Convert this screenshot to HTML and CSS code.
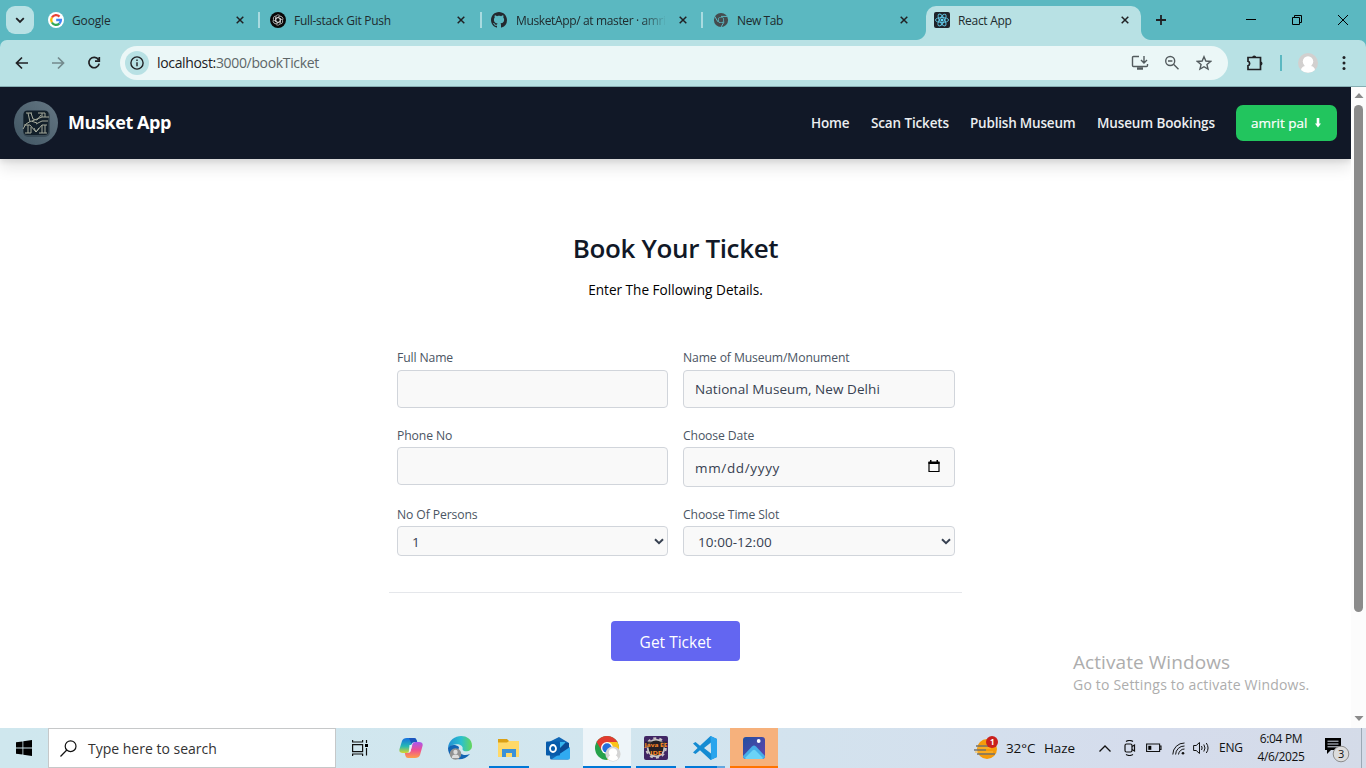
FILE: index.html
```html
<!DOCTYPE html>
<html lang="en">
<head>
<meta charset="utf-8">
<title>React App</title>
<link rel="stylesheet" href="styles.css">
</head>
<body>
<div class="screen">
  <header class="tabstrip">
    <button class="tab-search"><svg width="10" height="7" viewBox="0 0 10 7"><path d="M1.2 1.2 5 5l3.800-3.800" class="ln w2"/></svg></button>
    <div class="tab">
      <svg class="fav" viewBox="0 0 16 16"><circle cx="8" cy="8" r="8" fill="#fff"/><g fill="none" stroke-width="2.300"><path d="M3.900 5.500A4.900 4.900 0 0 1 11.500 4.600" stroke="#ea4335"/><path d="M3.900 5.500a4.900 4.900 0 0 0 0 5" stroke="#fbbc05"/><path d="M3.900 10.500A4.900 4.900 0 0 0 11.300 11.600" stroke="#34a853"/><path d="M11.300 11.600A4.900 4.900 0 0 0 12.900 8H8.200" stroke="#4285f4"/></g></svg>
      <span class="tab-title t-google">Google</span><svg class="x" viewBox="0 0 8 8"><path d="M.7.7l6.600 6.600M7.300.7.7 7.300"/></svg>
    </div>
    <div class="tab sep">
      <svg class="fav" viewBox="0 0 16 16"><circle cx="8" cy="8" r="8" fill="#080808"/><g fill="none" stroke="#ccc" stroke-width=".75"><path id="petal" d="M5.700 9.200V5.200a2.500 2.500 0 0 1 4.600-1.200M5.700 6.700 8 5.400l3.300 1.900"/><use href="#petal" transform="rotate(60 8 8)"/><use href="#petal" transform="rotate(120 8 8)"/><use href="#petal" transform="rotate(180 8 8)"/><use href="#petal" transform="rotate(240 8 8)"/><use href="#petal" transform="rotate(300 8 8)"/></g></svg>
      <span class="tab-title t-git">Full-stack Git Push</span><svg class="x" viewBox="0 0 8 8"><path d="M.7.7l6.600 6.600M7.300.7.7 7.300"/></svg>
    </div>
    <div class="tab sep">
      <svg class="fav" viewBox="0 0 16 16"><path fill="#24292f" d="M8 0C3.580 0 0 3.580 0 8c0 3.540 2.290 6.530 5.470 7.590.4.070.55-.17.55-.38 0-.19-.01-.82-.01-1.490-2.010.37-2.530-.49-2.690-.94-.09-.23-.48-.94-.82-1.130-.28-.15-.68-.52-.01-.53.63-.01 1.080.58 1.230.82.72 1.210 1.870.87 2.330.66.070-.52.28-.87.51-1.070-1.780-.2-3.640-.89-3.640-3.950 0-.87.31-1.590.82-2.150-.08-.2-.36-1.020.08-2.120 0 0 .67-.21 2.200.82.64-.18 1.320-.27 2-.27s1.360.09 2 .27c1.530-1.040 2.200-.82 2.200-.82.44 1.100.16 1.920.08 2.120.51.56.82 1.270.82 2.150 0 3.070-1.870 3.750-3.650 3.950.29.25.54.73.54 1.480 0 1.070-.01 1.930-.01 2.200 0 .21.15.46.55.38A8.010 8.010 0 0 0 16 8c0-4.420-3.580-8-8-8z"/></svg>
      <span class="tab-title t-hub">MusketApp/ at master · amri</span><svg class="x" viewBox="0 0 8 8"><path d="M.7.7l6.600 6.600M7.300.7.7 7.300"/></svg>
    </div>
    <div class="tab sep">
      <svg class="fav" viewBox="0 0 16 16"><circle cx="8" cy="8" r="5.100" fill="none" stroke="#454b4e" stroke-width="4"/><circle cx="8" cy="8" r="2.400" fill="#454b4e"/><path d="M8 4.400h6.400M4.900 9.800 1.700 4.300M11.100 9.800 7.900 15.300" stroke="#5bb8c1" stroke-width="1"/></svg>
      <span class="tab-title t-new">New Tab</span><svg class="x" viewBox="0 0 8 8"><path d="M.7.7l6.600 6.600M7.300.7.7 7.300"/></svg>
    </div>
    <div class="tab active">
      <svg class="fav" viewBox="0 0 16 16"><rect width="16" height="16" rx="2" fill="#20232a"/><g fill="none" stroke="#61c5e3" stroke-width=".9"><ellipse cx="8" cy="8" rx="6.600" ry="2.500"/><ellipse cx="8" cy="8" rx="6.600" ry="2.500" transform="rotate(60 8 8)"/><ellipse cx="8" cy="8" rx="6.600" ry="2.500" transform="rotate(120 8 8)"/></g><circle cx="8" cy="8" r="1.500" fill="#61dafb"/></svg>
      <span class="tab-title t-react">React App</span><svg class="x" viewBox="0 0 8 8"><path d="M.7.7l6.600 6.600M7.300.7.7 7.300"/></svg>
    </div>
    <svg class="plus" width="10" height="10" viewBox="0 0 10 10"><path d="M5 0v10M0 5h10" class="ln w2"/></svg>
    <div class="win-controls">
      <svg width="10" height="10"><path d="M0 4.500h10" stroke="#000"/></svg>
      <svg width="10" height="10" fill="none" stroke="#000"><path d="M.5 2.500h7v7h-7zM2.500 2.500v-2h7v7h-2"/></svg>
      <svg width="10" height="10"><path d="M0 0l10 10M10 0 0 10" stroke="#000"/></svg>
    </div>
  </header>

  <div class="toolbar">
    <div class="nav-icons">
      <svg width="14" height="14" viewBox="0 0 14 14"><path d="M13 7H2M7 1.500 1.500 7 7 12.500" class="ln w17"/></svg>
      <svg width="14" height="14" viewBox="0 0 14 14" opacity=".45"><path d="M1 7h11M7 1.500 12.500 7 7 12.500" class="ln w17"/></svg>
      <svg width="14" height="14" viewBox="0 0 14 14"><path d="M11.500 3.700A5.200 5.200 0 1 0 12.200 7.600M12.300 1v4.200H8" class="ln w17"/></svg>
    </div>
    <div class="omnibox">
      <span class="info"><svg width="14" height="14" viewBox="0 0 14 14"><circle cx="7" cy="7" r="6.100" class="ln w15"/><path d="M7 6.200v4M7 3.500v1.400" class="ln w15"/></svg></span>
      <span class="url">localhost:<span class="path">3000/bookTicket</span></span>
      <svg width="18" height="16" viewBox="0 0 18 16" class="grey"><path d="M8 1.500H2.500q-1 0-1 1v8q0 1 1 1h13q1 0 1-1V9M13 1v6M10 5l3 3 3-3"/><path d="M6 13.500h6" stroke-width="2.500"/></svg>
      <svg width="16" height="16" viewBox="0 0 16 16" class="grey"><circle cx="6.200" cy="6" r="4.500"/><path d="M9.500 9.300l5 5M4 6h4.400"/></svg>
      <svg width="16" height="16" viewBox="0 0 16 16" class="grey"><path d="M8 1.700l1.850 4.350 4.700.4-3.600 3.100 1.100 4.600L8 11.700l-4.050 2.450 1.100-4.600-3.600-3.100 4.700-.4z"/></svg>
    </div>
    <svg class="ext" width="18" height="18" viewBox="0 0 18 18"><path d="M2 3.500h12.500v12H2v-3.800a2.300 2.300 0 0 0 0-4.400z" class="ln w17"/><path d="M6.200 3.500a2 2 0 0 1 4 0zM14.500 7.500a2 2 0 0 1 0 4z"/></svg>
    <span class="bar"></span>
    <svg class="avatar" width="20" height="20" viewBox="0 0 20 20"><circle cx="10" cy="10" r="10" fill="#d2d0cf"/><circle cx="10" cy="8.500" r="5.200" fill="#fff"/><path d="M3 17q1-4 4.500-4h5q3.500 0 4.500 4a10 10 0 0 1-14 0z" fill="#fff"/></svg>
    <svg class="dots" width="4" height="16" viewBox="0 0 4 16" fill="#202124"><circle cx="2" cy="2.500" r="1.500"/><circle cx="2" cy="8" r="1.500"/><circle cx="2" cy="13.500" r="1.500"/></svg>
  </div>

  <div class="viewport">
    <div class="page">
      <nav class="site-nav">
        <svg class="logo" width="44" height="44" viewBox="0 0 44 44">
          <defs><linearGradient id="lg" x1="0" y1="1" x2="1" y2="0"><stop offset="0" stop-color="#405562"/><stop offset="1" stop-color="#657784"/></linearGradient></defs>
          <circle cx="22" cy="22" r="22" fill="url(#lg)"/><rect x="9" y="10" width="27" height="26" rx="5" fill="#2b3a45" opacity=".6"/><rect x="9.500" y="9.500" width="25" height="24.500" rx="4" fill="#121f29"/>
          <g fill="none" stroke="#a5aa9b" stroke-width="1"><path d="M12 12h6M14 12l2 9M17 12l2 6 4 1 4-5M24 12h7M28 12v4M31 12v4M18 20l10-4h7M22 23l6-3h6M10 24h6l6 7 6-7h5M11 32h6M14 24v8M17 26v6M20 27l2 4 3-4M25 32h8M28 24v8M31 24v8M9 28l3-5 5-3 6 2"/></g>
        </svg>
        <span class="brand">Musket App</span>
        <a class="l1">Home</a><a class="l2">Scan Tickets</a><a class="l3">Publish Museum</a><a class="l4">Museum Bookings</a>
        <button class="user"><span>amrit pal</span><svg width="6" height="10" viewBox="0 0 6 10"><path d="M1.700 0h2.600v5.500H6L3 9.500 0 5.500h1.700z" fill="#fff"/></svg></button>
      </nav>
      <main>
        <h1>Book Your Ticket</h1>
        <p class="sub">Enter The Following Details.</p>
        <form class="form">
          <label class="field"><span class="f1">Full Name</span><input type="text"></label>
          <label class="field"><span class="f2">Name of Museum/Monument</span><div class="control museum"><span>National Museum, New Delhi</span></div></label>
          <label class="field"><span class="f3">Phone No</span><input type="text"></label>
          <label class="field"><span class="f4">Choose Date</span><div class="control date"><span>mm/dd/yyyy</span><svg width="12" height="13" viewBox="0 0 12 13"><path d="M1 2.500h10v9H1z" fill="none" stroke="#000" stroke-width="1.200"/><path d="M.5 1.500h11v2.500H.5zM2 0h1.500v2H2zM8.500 0H10v2H8.500z"/></svg></div></label>
          <label class="field"><span class="f5">No Of Persons</span><div class="control select"><span>1</span><svg width="10" height="7" viewBox="0 0 10 7"><path d="M1 1.200l4 3.900 4-3.900"/></svg></div></label>
          <label class="field"><span class="f6">Choose Time Slot</span><div class="control select"><span class="slot">10:00-12:00</span><svg width="10" height="7" viewBox="0 0 10 7"><path d="M1 1.200l4 3.900 4-3.900"/></svg></div></label>
        </form>
        <div class="actions"><button class="get"><span>Get Ticket</span></button></div>
      </main>
    </div>
    <div class="scroll"><svg width="10" height="5"><path d="M5 0l4.500 5h-9z"/></svg><i class="thumb"></i><svg width="10" height="5"><path d="M5 5L.5 0h9z"/></svg></div>
    <div class="watermark"><div class="w-a">Activate Windows</div><div class="w-b">Go to Settings to activate Windows.</div></div>
  </div>

  <footer class="taskbar">
    <div class="start"><svg width="16" height="16" viewBox="0 0 16 16"><path d="M0 2.300 6.500 1.400v6.100H0zM7.300 1.300 16 0v7.500H7.300zM0 8.400h6.500v6.200L0 13.700zM7.300 8.400H16V16l-8.700-1.200z"/></svg></div>
    <div class="search"><svg width="17" height="17" viewBox="0 0 17 17" fill="none" stroke="#111" stroke-width="1.200"><circle cx="10.600" cy="6.200" r="5.400"/><path d="M6.800 10 .5 16.500"/></svg><span>Type here to search</span></div>
    <div class="start tv"><svg width="17" height="16" viewBox="0 0 17 16" fill="none" stroke="#111" stroke-width="1.200"><path d="M.6 4.600h10v7H.6zM.6 0v2h10V0M.6 16v-2h10v2M14.500 0v3M14.500 8v7.500"/><path d="M13 4h3v3h-3z" fill="#000" stroke="none"/></svg></div>
    <div class="apps">
      <div class="app"><svg width="24" height="22" viewBox="0 0 24 22"><defs><linearGradient id="c1" x2="0" y2="1"><stop stop-color="#1570e0"/><stop offset=".55" stop-color="#26b9b4"/><stop offset="1" stop-color="#d9d52b"/></linearGradient><linearGradient id="c2" x2="0" y2="1"><stop stop-color="#a857ef"/><stop offset=".5" stop-color="#ee4f93"/><stop offset="1" stop-color="#ff9e47"/></linearGradient></defs><path d="M8 1h7q2 0 2.500 2l.7 2h-3q-2 0-2.700 2l-2 7q-.7 2-3 2H4Q-.500 16 .5 12L3 4q1-3 5-3z" fill="url(#c1)"/><path d="M16 21H9q-2 0-2.500-2l-.7-3h3q2 0 2.700-2l2-7q.7-2 3-2h3.500q4.500 0 3.500 4l-2.500 9q-1 3-5 3z" fill="url(#c2)"/><path d="M10 1h5q2 0 2.500 2l.7 2h-3q-2 0-2.700 2z" fill="#1b55bd"/><path d="M10.500 8h2.700l-1.500 6q-.5 1.500-2 1.500z" fill="#e9eef4"/></svg></div>
      <div class="app"><svg width="24" height="24" viewBox="0 0 24 24"><defs><linearGradient id="e1"><stop stop-color="#2290d5"/><stop offset=".55" stop-color="#2bc0ce"/><stop offset="1" stop-color="#65d65a"/></linearGradient></defs><path d="M0 12C1-3 24-4 24 10c0 6.500-9.500 6.500-9.500 3C16 9 8 5 0 12z" fill="url(#e1)"/><path d="M0 12C0 24 15 27 22 18c-7 3-13-1-11-7-5-4-10-1-11 1z" fill="#1264b4"/><circle cx="7.500" cy="18" r="5.800" fill="#929292"/><circle cx="7.500" cy="16" r="2.200" fill="#ddd"/><path d="M4 21q0-2.500 3.500-2.500T11 21v1H4z" fill="#ddd"/></svg></div>
      <div class="app run"><svg width="22" height="20" viewBox="0 0 22 20"><path d="M0 1h9l2 2v4H0z" fill="#dba014"/><path d="M0 4.500h9l2-1.500h10v16H0z" fill="#ffd968"/><path d="M4 11h14v8h-4v-4H8v4H4z" fill="#3a91d8"/></svg></div>
      <div class="app"><svg width="24" height="23" viewBox="0 0 24 23"><path d="M3 5 13 0l10 6v15q0 1.500-1.500 1.500H5.500Q4 22.500 4 21z" fill="#1067b5"/><path d="M12 5h7v6h-7z" fill="#34b4ee"/><path d="M19 6l4 0v6l-9 5-1-5z" fill="#0b4b94"/><path d="M6 22 24 10v11q0 1.500-1.500 1.500z" fill="#30aaf0"/><rect y="4.500" width="14" height="14" rx="1" fill="#075bab"/><ellipse cx="7" cy="11.500" rx="3" ry="3.500" fill="none" stroke="#fff" stroke-width="1.800"/></svg></div>
      <div class="app run full light"><svg class="chrome" width="26" height="26" viewBox="0 0 26 26"><circle cx="12" cy="12" r="12" fill="#27a24b"/><path d="M1.600 6A12 12 0 0 1 22.400 6H12L7 15z" fill="#e13c30"/><path d="M22.400 6A12 12 0 0 1 12 24l5-9-5-9z" fill="#fcc41b"/><circle cx="12" cy="12" r="6" fill="#fff"/><circle cx="12" cy="12" r="4.700" fill="#246fdc"/><circle cx="18" cy="18" r="7.600" fill="#d4d4d4"/><circle cx="18" cy="16.500" r="4.200" fill="#fff"/><path d="M13 23q0-4 5-4t5 4a7.600 7.600 0 0 1-10 0z" fill="#fff"/></svg></div>
      <div class="app run"><svg width="24" height="24" viewBox="0 0 24 24"><rect width="24" height="24" rx="2" fill="#402664"/><circle cx="12" cy="12" r="8.300" fill="#202020" stroke="#c9c4c5" stroke-width="1.800"/><circle cx="12" cy="12" r="9.800" fill="none" stroke="#c9c4c5" stroke-width="2" stroke-dasharray="3 3.160"/><path d="M1 5.500h22v6H18v6.500H6v-6.500H1z" fill="#282027" opacity=".8"/><text x=".5" y="10.500" textLength="23" lengthAdjust="spacingAndGlyphs" class="ide">Java EE</text><text x="6" y="18.500" textLength="12" lengthAdjust="spacingAndGlyphs" class="ide">IDE</text></svg></div>
      <div class="app run multi"><svg width="24" height="24" viewBox="0 0 24 24"><path d="M17.500 0 24 3v18l-6.500 3L7 14.200 2.500 18 0 16.500 4.600 12 0 7.500 2.500 6 7 9.800zM18 6.600 11 12l7 5.400z" fill="#148bd2" fill-rule="evenodd"/><path d="M17.500 0 24 3v18l-6.500 3 .8-2z" fill="#2aa5ed"/></svg></div>
      <div class="app run full orange"><svg width="22" height="22" viewBox="0 0 22 22"><defs><linearGradient id="ph" x2="1" y2="1"><stop stop-color="#214fa0"/><stop offset="1" stop-color="#6544ad"/></linearGradient></defs><rect width="22" height="22" rx="3" fill="url(#ph)"/><path d="M0 19 9 9.500q2-2 4 0L22 19q0 3-3 3H3q-3 0-3-3z" fill="#46aee8"/><path d="M2 21 9.500 13.500q1.500-1.500 3 0L20 21l-1 1H3z" fill="#6bd3f7"/><circle cx="15.700" cy="4" r="1.900" fill="#fff"/></svg></div>
    </div>
    <div class="tray">
      <svg class="weather" width="25" height="24" viewBox="0 0 25 24"><circle cx="13" cy="13" r="10" fill="#f59a0b"/><path d="M2 10h14M0 14h12M3 18h18" stroke="#74746f" stroke-width="1.600"/><path d="M4 12h13M1 16h18" stroke="#ffbc38" stroke-width="1.200"/><circle cx="18" cy="6" r="6" fill="#c9201d"/><text x="16" y="9" class="badge1">1</text></svg>
      <span class="temp">32°C</span><span class="haze">Haze</span>
      <svg class="chev" width="12" height="7" viewBox="0 0 12 7" fill="none" stroke="#111" stroke-width="1.300"><path d="M.5 6.500 6 1l5.500 5.500"/></svg>
      <svg class="cam" width="12" height="16" viewBox="0 0 12 16" fill="none" stroke="#111" stroke-width="1.200"><rect x="1" y="4" width="7" height="8" rx="1.500"/><path d="M8 6.500l2.500-1.500v6L8 9.500M2 1.500q3.500-2 7 0M2 14.500q3.500 2 7 0"/></svg>
      <svg class="bat" width="16" height="10" viewBox="0 0 16 10"><path d="M.6 1h13v7.500H.6zM14 3h1v3.500h-1" fill="none" stroke="#111" stroke-width="1.100"/><path d="M2.300 2.800h3v4h-3z"/></svg>
      <svg class="wifi" width="13" height="13" viewBox="0 0 13 13" fill="none" stroke="#111"><path d="M.8 12.500A11.500 11.500 0 0 1 12.500 1M3.600 12.500A8.700 8.700 0 0 1 12.500 4M6.500 12.500a6 6 0 0 1 6-5.500"/><circle cx="11" cy="11.200" r="1.300" fill="#111" stroke="none"/></svg>
      <svg class="spk" width="17" height="14" viewBox="0 0 17 14" fill="none" stroke="#111"><path d="M.6 4.500h2.600L6.500 1.500v11L3.200 9.500H.6zM8.500 5q1.300 2 0 4M10.800 3.500q2.400 3.500 0 7M13.300 2q3.500 5 0 10"/></svg>
      <span class="eng">ENG</span>
      <div class="clock"><span class="k1">6:04 PM</span><span class="k2">4/6/2025</span></div>
      <svg class="notif" width="26" height="26" viewBox="0 0 26 26"><path d="M1 1h16v12H7l-4 4v-4H1z"/><path d="M3.500 4.200h11M3.500 7h11M3.500 9.800h11" stroke="#d4dce9"/><circle cx="17" cy="17" r="7.800" fill="#dcdcdc" stroke="#8c8c8c"/><text x="14" y="21" class="badge3">3</text></svg>
      <i class="peek"></i>
    </div>
  </footer>
</div>
</body>
</html>
```
FILE: styles.css
```css
* { box-sizing: border-box; }
body { margin: 0; font-family: "Open Sans", "Noto Sans", sans-serif; }
button { border: 0; padding: 0; font: inherit; }
span, a { white-space: nowrap; }
svg { display: block; flex: none; }
.screen { width: 1366px; height: 768px; overflow: hidden; display: flex; flex-direction: column; background: linear-gradient(#5bb8c1 60px, #fff 60px); }
.ln { fill: none; stroke: #202124; }
.w2 { stroke-width: 1.8; }
.w17 { stroke-width: 1.7; }
.w15 { stroke-width: 1.4; }

/* Tab strip */
.tabstrip { height: 40px; background: #5bb8c1; display: flex; align-items: flex-start; padding-left: 6px; flex: none; position: relative; }
.tab-search { width: 28px; height: 28px; margin: 6px 6px 0 0; border-radius: 9px; background: #b8e1e4; display: grid; place-items: center; }
.tab { width: 221.5px; height: 34px; margin-top: 6px; padding-left: 8px; display: flex; align-items: center; padding-bottom: 6px; position: relative; flex: none; }
.tab.sep::before { content: ""; position: absolute; left: -3.5px; top: 6px; width: 2px; height: 16px; background: #a9dbe0; }
.tab.active { width: 215px; background: #b8e1e4; border-radius: 10px 10px 0 0; z-index: 1; }
.tab.active::before, .tab.active::after { content: ""; position: absolute; bottom: 0; width: 10px; height: 10px; }
.tab.active::before { left: -10px; background: radial-gradient(circle at 0 0, #5bb8c1 9.500px, #b8e1e4 10.500px); }
.tab.active::after { right: -10px; background: radial-gradient(circle at 100% 0, #5bb8c1 9.500px, #b8e1e4 10.500px); }
.fav { width: 16px; height: 16px; }
.tab-title { margin-left: 8px; width: 150px; overflow: hidden; font-size: 12px; line-height: 18px; margin-top: 1px; color: #202b2e; }
.t-google { letter-spacing: -.15px; }
.t-git { letter-spacing: -.28px; padding-left: .5px; }
.t-hub { letter-spacing: -.36px; padding-left: 1px; -webkit-mask-image: linear-gradient(90deg, #000 126px, transparent 152px); mask-image: linear-gradient(90deg, #000 126px, transparent 152px); }
.t-new { letter-spacing: -.4px; padding-left: .5px; }
.t-react { letter-spacing: -.3px; }
.x { width: 8px; height: 8px; margin-left: 13.5px; fill: none; stroke: #202124; stroke-width: 1.5; }
.active .x { margin-left: 13px; }
.plus { margin: 15px 0 0 15px; }
.win-controls { display: flex; gap: 36px; margin: 15px 0 0 80px; }

/* Toolbar */
.toolbar { height: 47px; flex: none; background: #b8e1e4; border-bottom: 1px solid #86aeb3; border-radius: 7px 7px 0 0; display: flex; align-items: center; padding-left: 15px; }
.nav-icons { display: flex; gap: 22px; width: 105px; }
.omnibox { width: 1108px; height: 34px; border-radius: 17px; background: #ebf7f7; display: flex; align-items: center; padding: 0 16px 0 5px; gap: 16px; }
.omnibox .grey:nth-child(3) { margin-right: -1px; }
.info { width: 24px; height: 24px; border-radius: 50%; background: #b8e1e4; display: grid; place-items: center; }
.url { font-size: 14px; margin: -1px 0 0 -8px; flex: 1; color: #202124; letter-spacing: -.34px; }
.path { color: #5d6668; }
.grey { fill: none; stroke: #535b5e; stroke-width: 1.4; }
.ext { margin-left: 18px; fill: #202124; }
.bar { width: 2px; height: 16px; background: #5bb8c1; margin-left: 16px; }
.avatar { margin-left: 16px; }
.dots { margin-left: 24px; }

/* Viewport */
.viewport { height: 641px; flex: none; display: flex; position: relative; background: #fff; }
.page { width: 1351px; overflow: hidden; }
.site-nav { height: 72px; background: #111827; display: flex; align-items: center; padding: 0 14px; box-shadow: 0 9px 14px rgba(0,0,0,.1), 0 3px 5px rgba(0,0,0,.08); color: #eceef1; font-size: 13.500px; font-weight: 600; letter-spacing: -.13px; }
.brand { margin-left: 10px; width: 743px; font-size: 18px; font-weight: 700; color: #fff; letter-spacing: -.43px; margin-top: -2px; }
.l1 { width: 60px; }
.l2 { width: 99px; }
.l3 { width: 127px; letter-spacing: -.2px; }
.l4 { width: 139px; }
.user { width: 101px; height: 36px; border-radius: 7px; background: #22c55e; color: #fff; display: flex; align-items: center; padding-left: 15px; text-align: left; letter-spacing: 0; }
.user span { width: 64px; font-weight: 500; -webkit-text-stroke: .2px #fff; }
.scroll { width: 15px; background: #fcfcfc; display: flex; flex-direction: column; align-items: center; padding: 6px 0 7px; fill: #8b8b8b; }
.thumb { width: 9px; height: 507px; border-radius: 5px; background: #8b8b8b; margin: 7px 0 auto; }

main { padding: 69px 389px 0; text-align: center; width: 1351px; }
h1 { margin: 0; font-size: 26px; font-weight: 600; line-height: 40px; color: #111827; letter-spacing: -.36px; }
.sub { margin: 12px 0 0; font-size: 13.600px; line-height: 20px; color: #000; }
.form { display: grid; grid-template-columns: 271px 272px; column-gap: 15px; padding: 48px 0 0 8px; text-align: left; border-bottom: 1px solid #e5e7eb; grid-template-rows: 78px 79px 50px; height: 293px; align-items: start; }
.field { display: block; font-size: 12.200px; color: #4b5563; }
.field > span { display: block; line-height: 20px; margin-bottom: 2px; letter-spacing: -.12px; }
.field:nth-child(n+3) > span { margin-bottom: 1px; }
.field input, .control { display: flex; align-items: center; justify-content: space-between; width: 100%; height: 38px; border: 1px solid #d1d5db; border-radius: 4px; background: #f9f9f9; color: #374151; font-size: 13.500px; }
.museum { padding-left: 11px; letter-spacing: .07px; }
.date { height: 40px; padding: 2px 14px 0 11px; letter-spacing: .65px; }
.date svg { margin-top: -4px; }
.select { height: 30px; padding: 1px 3px 0 14px; letter-spacing: .05px; }
.select path { fill: none; stroke: #374151; stroke-width: 2; }
.select svg { margin-top: -1px; }
.actions { padding-top: 28px; display: flex; justify-content: center; }
.get { width: 129px; height: 40px; border-radius: 4px; background: #6366f1; color: #fff; font-size: 15.500px; padding-top: 2px; }
.watermark { position: absolute; left: 1073px; top: 562px; color: #adadad; }
.w-a { font-size: 19px; line-height: 26px; letter-spacing: .07px; }
.w-b { font-size: 14px; line-height: 20px; letter-spacing: .2px; white-space: nowrap; }

/* Taskbar */
.taskbar { height: 40px; flex: none; display: flex; background: linear-gradient(90deg, #cfe7ee 0%, #d2e6ef 45%, #d5dcec 85%, #d4dbe8 100%); }
.start { width: 48px; display: grid; place-items: center; }
.search { width: 288px; border: 1px solid #c6c8c9; background: #fff; display: flex; align-items: center; padding-left: 11px; gap: 11px; font-size: 14px; color: #333; }
.apps { display: flex; gap: 1px; margin-left: 3px; }
.app { width: 48px; height: 40px; display: grid; place-items: center; position: relative; }
.run::after { content: ""; position: absolute; left: 4px; right: 4px; bottom: 0; height: 2px; background: #0078d7; }
.full::after { left: 0; right: 0; }
.light { background: #eef5f9; }
.orange { background: #f6b17c; }
.orange::after { background: #ff7300; }
.multi::after { background: linear-gradient(90deg, #0078d7 32px, #62a6df 32px); }
.chrome { margin: 2px 0 0 2px; }
.ide { font: 700 6px "Open Sans", sans-serif; fill: #ff8a25; }
.tray { flex: 1; display: flex; align-items: center; font-size: 13.500px; color: #111; padding-left: 196px; }
.temp { margin-left: 7px; width: 38px; letter-spacing: -.1px; }
.haze { width: 55px; letter-spacing: -.1px; }
.cam { margin-left: 13px; }
.bat { margin-left: 10px; }
.wifi { margin-left: 10px; }
.spk { margin-left: 8px; }
.eng { margin-left: 9px; font-size: 12px; width: 36px; letter-spacing: -.2px; margin-top: -1px; }
.clock { display: flex; flex-direction: column; width: 52px; align-items: center; font-size: 12px; line-height: 18px; letter-spacing: -.35px; }
.notif { margin: 4px 0 0 17px; }
.peek { width: 1px; height: 40px; background: #9ca9b5; margin-left: 11px; }
.badge1 { font: 700 8px "Open Sans", sans-serif; fill: #fff; }
.badge3 { font: 11px "Open Sans", sans-serif; fill: #111; }
```
